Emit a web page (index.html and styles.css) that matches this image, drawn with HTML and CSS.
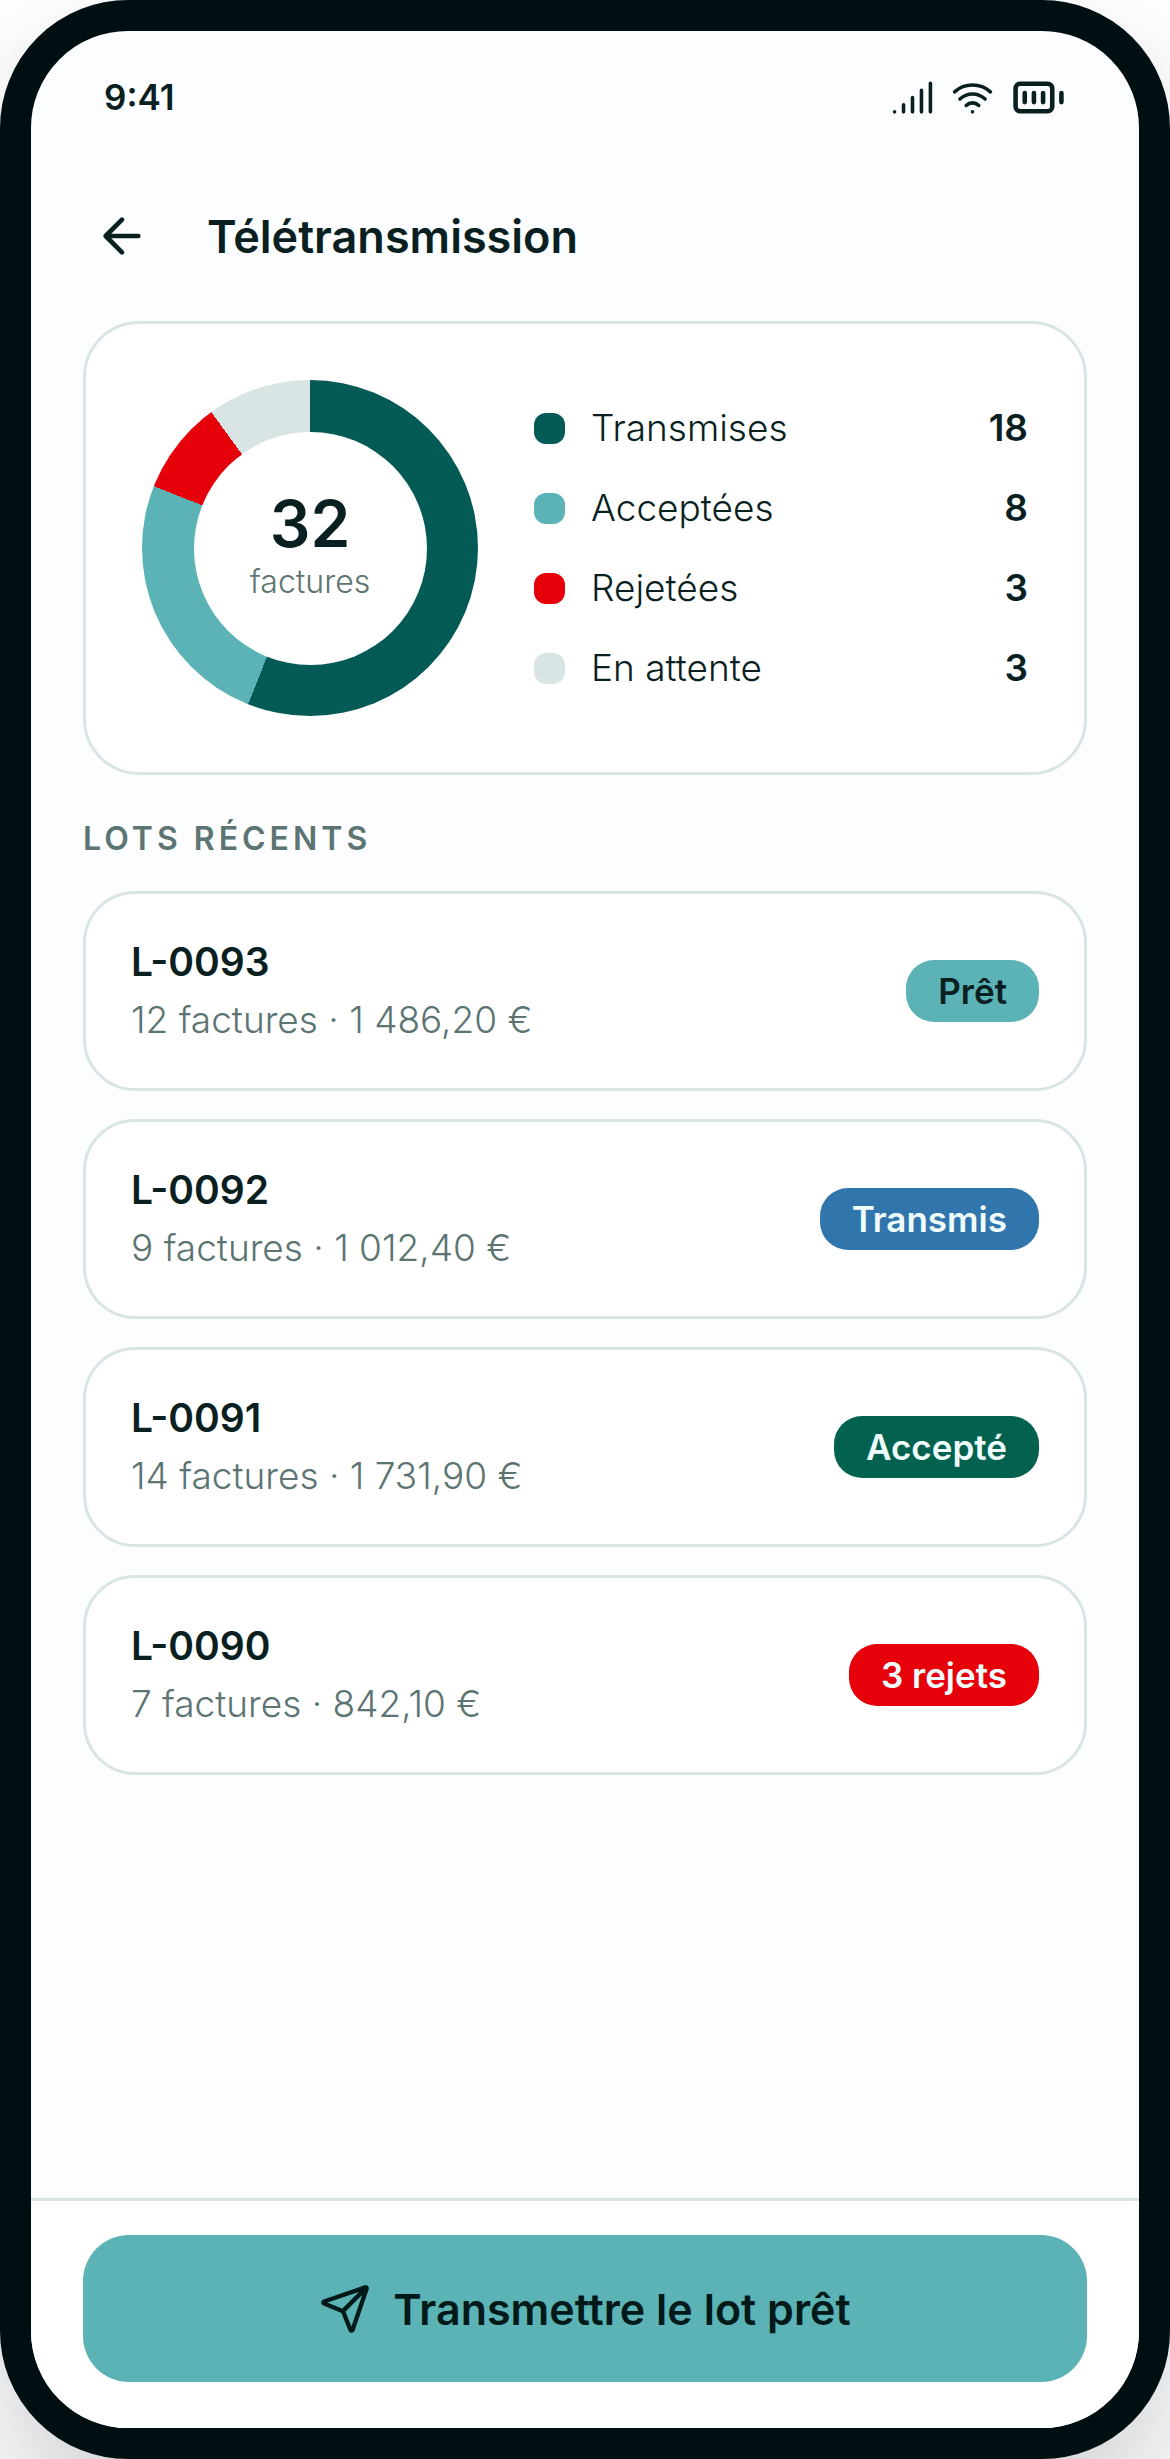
FILE: index.html
```html
<!DOCTYPE html>
<html lang="fr">
<head>
<meta charset="UTF-8">
<meta name="viewport" content="width=device-width, initial-scale=1">
<title>Télétransmission</title>
<link rel="stylesheet" href="styles.css">
</head>
<body>

<div class="phone">
	<div class="status">
		<span class="time">9:41</span>
		<div class="status-icons">
			<svg class="icon" viewBox="0 0 24 24"><path d="M2 20h.01M7 20v-4M12 20v-8M17 20V8M22 4v16" /></svg>
			<svg class="icon" viewBox="0 0 24 24"><path d="M12 20h.01M2 8.82a15 15 0 0 1 20 0M5 12.859a10 10 0 0 1 14 0M8.5 16.429a5 5 0 0 1 7 0" /></svg>
			<svg class="icon battery" viewBox="0 0 24 24"><rect x="2" y="6" width="16" height="12" rx="2" /><path d="M6 10v4M10 10v4M14 10v4M22 10v4" /></svg>
		</div>
	</div>

	<header class="topbar">
		<button class="back" type="button" aria-label="Retour">
			<svg class="icon" viewBox="0 0 24 24"><path d="m12 19-7-7 7-7M19 12H5" /></svg>
		</button>
		<h1>Télétransmission</h1>
	</header>

	<main>
		<section class="summary">
			<div class="donut">
				<div class="donut-hole">
					<strong>32</strong>
					<span>factures</span>
				</div>
			</div>
			<ul class="legend">
				<li><i class="dot sent"></i>Transmises <b>18</b></li>
				<li><i class="dot accepted"></i>Acceptées <b>8</b></li>
				<li><i class="dot rejected"></i>Rejetées <b>3</b></li>
				<li><i class="dot waiting"></i>En attente <b>3</b></li>
			</ul>
		</section>

		<h2>Lots récents</h2>
		<ul class="lots">
			<li class="lot">
				<div>
					<h3>L-0093</h3>
					<p>12 factures · 1 486,20 €</p>
				</div>
				<span class="badge ready">Prêt</span>
			</li>
			<li class="lot">
				<div>
					<h3>L-0092</h3>
					<p>9 factures · 1 012,40 €</p>
				</div>
				<span class="badge transmitted">Transmis</span>
			</li>
			<li class="lot">
				<div>
					<h3>L-0091</h3>
					<p>14 factures · 1 731,90 €</p>
				</div>
				<span class="badge ok">Accepté</span>
			</li>
			<li class="lot">
				<div>
					<h3>L-0090</h3>
					<p>7 factures · 842,10 €</p>
				</div>
				<span class="badge error">3 rejets</span>
			</li>
		</ul>
	</main>

	<footer class="actions">
		<button class="send" type="button">
			<svg class="icon" viewBox="0 0 24 24"><path d="M14.536 21.686a.5.5 0 0 0 .937-.024l6.5-19a.496.496 0 0 0-.635-.635l-19 6.5a.5.5 0 0 0-.024.937l7.93 3.18a2 2 0 0 1 1.112 1.11zM21.854 2.147l-10.94 10.939" /></svg>
			Transmettre le lot prêt
		</button>
	</footer>
</div>

</body>
</html>
```
FILE: styles.css
```css
:root {
	--ink: #0a1f1f;
	--muted: #5c7472;
	--line: #d9e5e5;
	--teal: #5bb3b5;
	--deep: #045a55;
	--red: #e60009;
}
* {
	box-sizing: border-box;
}
body {
	background: #fff;
	color: var(--ink);
	font-family: Inter, "Liberation Sans", sans-serif;
	font-size: 37px;
	margin: 0;
	overflow-x: hidden;
}
h1, h2, h3, p, ul {
	margin: 0;
	padding: 0;
}
ul {
	list-style: none;
}
button {
	border: 0;
	color: inherit;
	cursor: pointer;
	font: inherit;
	padding: 0;
}
.icon {
	display: block;
	fill: none;
	height: 43px;
	stroke: currentColor;
	stroke-linecap: round;
	stroke-linejoin: round;
	stroke-width: 2;
	width: 43px;
}

/* Device frame */
.phone {
	background: #fcfdff;
	border: 31px solid #001012;
	border-radius: 128px;
	box-shadow: 0 60px 120px rgba(10, 25, 35, .2);
	display: flex;
	flex-direction: column;
	min-height: 100vh;
	overflow: hidden;
}
.status {
	align-items: center;
	display: flex;
	height: 132px;
	justify-content: space-between;
	padding: 0 73px;
}
.time {
	font-size: 35px;
	font-weight: 600;
}
.status-icons {
	align-items: center;
	display: flex;
	gap: 17px;
}
.battery {
	height: 55px;
	width: 55px;
}

.topbar {
	align-items: center;
	display: flex;
	gap: 46px;
	padding: 34px 52px 46px;
}
.back {
	align-items: center;
	background: none;
	display: flex;
	height: 78px;
	justify-content: center;
	width: 78px;
}
.back .icon {
	height: 56px;
	width: 56px;
}
h1 {
	font-size: 45px;
	font-weight: 600;
}

main {
	flex: 1;
	padding: 0 52px 52px;
}
.summary {
	align-items: center;
	background: #fff;
	border: 3px solid var(--line);
	border-radius: 56px;
	display: flex;
	gap: 56px;
	padding: 56px;
}
.donut {
	background: conic-gradient(var(--deep) 0 56%, var(--teal) 0 81%, var(--red) 0 90%, var(--line) 0);
	border-radius: 50%;
	display: grid;
	flex: none;
	height: 336px;
	place-items: center;
	width: 336px;
}
.donut-hole {
	align-items: center;
	background: #fff;
	border-radius: 50%;
	display: flex;
	flex-direction: column;
	height: 233px;
	justify-content: center;
	padding-bottom: 8px;
	width: 233px;
}
.donut-hole strong {
	font-size: 64px;
	font-weight: 600;
	line-height: 76px;
}
.donut-hole span {
	color: var(--muted);
	font-size: 32px;
	font-weight: 300;
	line-height: 40px;
}
.legend {
	display: grid;
	flex: 1;
	gap: 26px;
}
.legend li {
	align-items: center;
	display: flex;
	font-weight: 300;
	line-height: 54px;
}
.legend b {
	font-weight: 600;
	margin-left: auto;
}
.dot {
	border-radius: 12px;
	height: 31px;
	margin-right: 26px;
	width: 31px;
}
.sent { background: var(--deep); }
.accepted { background: var(--teal); }
.rejected { background: var(--red); }
.waiting { background: var(--line); }

h2 {
	color: var(--muted);
	font-size: 32px;
	font-weight: 600;
	letter-spacing: 4px;
	line-height: 40px;
	margin: 44px 0 32px;
	text-transform: uppercase;
}
.lots {
	display: grid;
	gap: 28px;
}
.lot {
	align-items: center;
	background: #fff;
	border: 3px solid var(--line);
	border-radius: 52px;
	display: flex;
	justify-content: space-between;
	padding: 42px 45px;
}
h3 {
	font-size: 39px;
	font-weight: 600;
	line-height: 52px;
	margin-bottom: 6px;
}
.lot p {
	color: var(--muted);
	font-weight: 300;
	line-height: 52px;
}
.badge {
	border-radius: 28px;
	color: #f0fdfd;
	font-size: 35px;
	font-weight: 600;
	line-height: 62px;
	padding: 0 32px;
}
.ready {
	background: var(--teal);
	color: var(--ink);
}
.transmitted { background: #3076ad; }
.ok { background: #02624f; }
.error { background: var(--red); }

.actions {
	background: #fff;
	border-top: 3px solid var(--line);
	padding: 34px 52px 46px;
}
.send {
	align-items: center;
	background: var(--teal);
	border-radius: 46px;
	color: #001a1a;
	display: flex;
	font-size: 43px;
	font-weight: 600;
	gap: 22px;
	height: 147px;
	justify-content: center;
	width: 100%;
}
.send .icon {
	height: 52px;
	width: 52px;
}
```
